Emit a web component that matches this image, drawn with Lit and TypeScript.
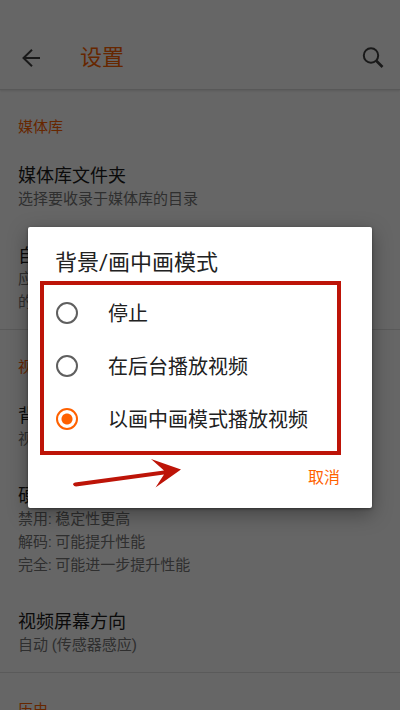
import { LitElement, html, css } from "lit";
import { customElement, state } from "lit/decorators.js";

interface Item {
  title: string;
  summary: string[];
}

interface Section {
  heading: string;
  items: Item[];
}

const SECTIONS: Section[] = [
  {
    heading: "媒体库",
    items: [
      { title: "媒体库文件夹", summary: ["选择要收录于媒体库的目录"] },
      { title: "自动", summary: ["应", "的"] },
    ],
  },
  {
    heading: "视频",
    items: [
      { title: "背景", summary: ["视频"] },
      { title: "硬件", summary: ["禁用: 稳定性更高", "解码: 可能提升性能", "完全: 可能进一步提升性能"] },
      { title: "视频屏幕方向", summary: ["自动 (传感器感应)"] },
    ],
  },
  { heading: "历史", items: [] },
];

const MODES = ["停止", "在后台播放视频", "以画中画模式播放视频"];

@customElement("settings-section")
class SettingsSection extends LitElement {
  static properties = { section: { attribute: false } };
  declare section: Section;

  static styles = css`
    :host {
      display: block;
      box-shadow: inset 0 -1px 0 #e0e0e0;
    }
    .heading {
      margin: 0;
      padding: 25px 18px 8px;
      font-size: 15px;
      line-height: 24px;
      font-weight: 400;
      color: #ff6100;
    }
    .item {
      padding: 17px 18px 16px;
    }
    .title {
      margin: 0;
      font-size: 18px;
      line-height: 24px;
      font-weight: 400;
      color: #1c1c1c;
    }
    .summary {
      margin: 0;
      font-size: 15px;
      line-height: 23px;
      color: #757575;
      white-space: nowrap;
    }
  `;

  render() {
    return html`
      <h2 class="heading">${this.section.heading}</h2>
      ${this.section.items.map(
        (item) => html`
          <div class="item">
            <h3 class="title">${item.title}</h3>
            ${item.summary.map((line) => html`<p class="summary">${line}</p>`)}
          </div>
        `
      )}
    `;
  }
}

@customElement("mode-dialog")
class ModeDialog extends LitElement {
  @state() private selected = 2;

  static styles = css`
    :host {
      display: block;
      width: 100%;
    }
    .dialog {
      background: #fff;
      border-radius: 2px;
      box-shadow: 0 6px 20px rgba(0, 0, 0, 0.35), 0 1px 3px rgba(0, 0, 0, 0.4);
    }
    .title {
      margin: 0;
      padding: 24px 27px 11px;
      font-size: 22px;
      line-height: 24px;
      font-weight: 400;
      color: #212121;
    }
    .options {
      position: relative;
      margin: 0;
      padding: 0;
      border: 0;
    }
    .option {
      display: flex;
      align-items: center;
      gap: 30px;
      height: 53px;
      padding: 0 28px;
      font-size: 20px;
      color: #212121;
    }
    .radio {
      appearance: none;
      flex: none;
      box-sizing: border-box;
      width: 22px;
      height: 22px;
      margin: 0;
      border: 2px solid #5f5f5f;
      border-radius: 50%;
    }
    .radio:checked {
      border-color: #ff6100;
      background: radial-gradient(circle, #ff6100 5px, transparent 6px);
    }
    .frame {
      position: absolute;
      inset: -5px 31px -10px 12px;
      border: 4px solid #bd1408;
      pointer-events: none;
    }
    .actions {
      position: relative;
      display: flex;
      justify-content: flex-end;
      padding: 13px 24px 14px;
    }
    .cancel {
      height: 36px;
      padding: 0 8px;
      border: 0;
      background: none;
      font: inherit;
      font-size: 16px;
      color: #ff6100;
    }
    .arrow {
      position: absolute;
      left: 44px;
      top: 11px;
      pointer-events: none;
    }
  `;

  render() {
    return html`
      <section class="dialog" role="dialog" aria-labelledby="t">
        <h2 class="title" id="t">背景/画中画模式</h2>
        <fieldset class="options" aria-labelledby="t">
          ${MODES.map(
            (mode, i) => html`
              <label class="option">
                <input
                  class="radio"
                  type="radio"
                  name="mode"
                  .checked=${this.selected === i}
                  @change=${() => (this.selected = i)}
                />
                <span>${mode}</span>
              </label>
            `
          )}
          <div class="frame"></div>
        </fieldset>
        <div class="actions">
          <svg class="arrow" width="112" height="34" viewBox="0 0 112 34" aria-hidden="true">
            <path
              d="M3 26.500 Q1 27 1 28.500 Q2 30.500 4 30.500 L92 18.500 L83.500 31.500 L109 13.500 L79 3 L92 14.500 Z"
              fill="#bd1408"
            />
          </svg>
          <button class="cancel" type="button">取消</button>
        </div>
      </section>
    `;
  }
}

@customElement("app-root")
class AppRoot extends LitElement {
  static styles = css`
    :host {
      display: block;
      position: relative;
      height: 100vh;
      overflow: hidden;
      background: #fff;
      font-family: Roboto, "Noto Sans CJK SC", sans-serif;
    }
    .bar {
      display: flex;
      align-items: center;
      padding: 26px 15px 0 19px;
      height: 63px;
      border-bottom: 1px solid #dcdcdc;
      box-shadow: 0 1px 2px rgba(0, 0, 0, 0.12);
    }
    .icon {
      display: flex;
      padding: 0;
      border: 0;
      background: none;
      color: #404040;
    }
    .name {
      flex: 1;
      margin: 0 0 0 37px;
      font-size: 22px;
      line-height: 28px;
      font-weight: 400;
      color: #ff6100;
    }
    .scrim {
      position: absolute;
      inset: 0;
      display: flex;
      align-items: center;
      box-sizing: border-box;
      padding: 25px 28px 0;
      background: rgba(0, 0, 0, 0.6);
    }
  `;

  render() {
    return html`
      <header class="bar">
        <button class="icon" type="button" aria-label="返回">
          <svg width="24" height="24" viewBox="0 0 24 24" fill="none" stroke="currentColor" stroke-width="2">
            <path d="M21 12H4.500M13 3.700L4.500 12L13 20.300" />
          </svg>
        </button>
        <h1 class="name">设置</h1>
        <button class="icon" type="button" aria-label="搜索">
          <svg width="24" height="24" viewBox="0 0 24 24" fill="none" stroke="currentColor" stroke-width="2">
            <circle cx="10" cy="9.500" r="7.200" />
            <path d="M15 14.500L21.500 21" stroke-width="2.600" />
          </svg>
        </button>
      </header>
      <main>
        ${SECTIONS.map((s) => html`<settings-section .section=${s}></settings-section>`)}
      </main>
      <div class="scrim"><mode-dialog></mode-dialog></div>
    `;
  }
}
